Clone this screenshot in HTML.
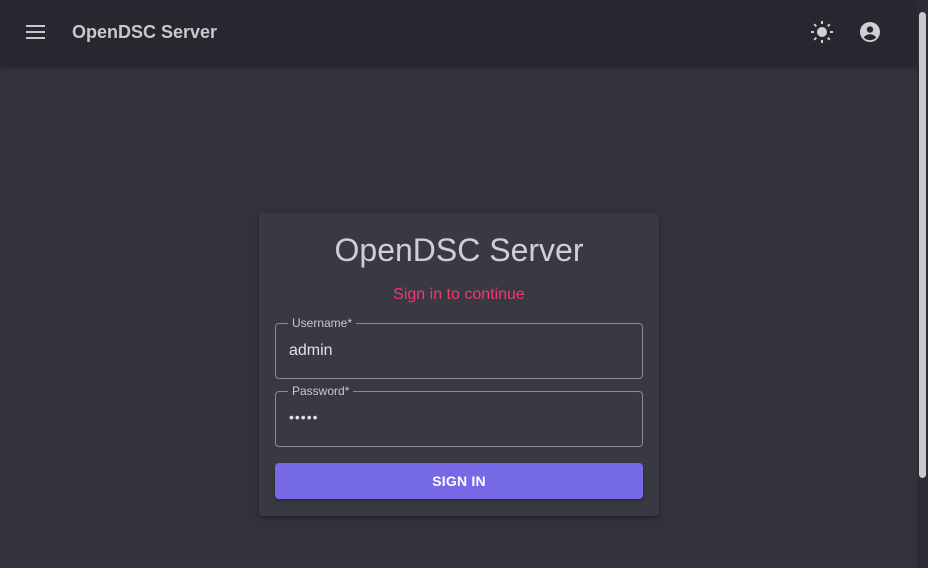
<!DOCTYPE html>
<html><head><style>
*{box-sizing:border-box;margin:0;padding:0}
body{width:928px;height:568px;overflow:hidden;background:#32323c;font-family:"Liberation Sans",sans-serif;position:relative}
.hdr{position:absolute;left:0;top:0;width:917px;height:65px;background:#26272f;box-shadow:0 2px 4px rgba(0,0,0,.3)}
.title{position:absolute;left:72px;top:22px;font-size:18px;font-weight:bold;color:#c8c8cc}
.sb{position:absolute;right:0;top:0;width:11px;height:568px;background:#2b2b33}
.thumb{position:absolute;right:2px;top:12px;width:7px;height:466px;background:#c9c9cc;border-radius:4px}
.card{position:absolute;left:259px;top:213px;width:400px;height:303px;background:#393943;border-radius:4px;box-shadow:0 2px 4px rgba(0,0,0,.3)}
.h{position:absolute;left:0;width:100%;text-align:center;top:19px;font-size:32px;color:#cfcfd3}
.sub{position:absolute;left:0;width:100%;text-align:center;top:73px;font-size:16px;color:#f0386b}
.f{position:absolute;left:16px;width:368px;height:56px;border:1px solid #8a8a90;border-radius:4px}
.f label{position:absolute;left:12px;top:-8px;font-size:12px;color:#c8c8cc;background:#393943;padding:0 4px}
.f span{position:absolute;left:13px;top:18px;font-size:16px;color:#e0e0e4}
.btn{position:absolute;left:16px;top:250px;width:368px;height:36px;background:#7569e6;border-radius:4px;color:#fff;font-weight:bold;font-size:14px;text-align:center;line-height:36px;letter-spacing:.2px;box-shadow:0 2px 3px rgba(0,0,0,.3)}
</style></head><body>
<div class="hdr">
<svg style="position:absolute;left:26px;top:25px" width="20" height="14"><rect y="0" width="19" height="2" fill="#c8c8cc"/><rect y="6" width="19" height="2" fill="#c8c8cc"/><rect y="12" width="19" height="2" fill="#c8c8cc"/></svg>
<div class="title">OpenDSC Server</div>
<svg style="position:absolute;left:810px;top:20px" width="24" height="24" viewBox="0 0 24 24" fill="#d0d0d4"><circle cx="12" cy="12" r="5"/><g stroke="#d0d0d4" stroke-width="2"><line x1="12" y1="1" x2="12" y2="4"/><line x1="12" y1="20" x2="12" y2="23"/><line x1="1" y1="12" x2="4" y2="12"/><line x1="20" y1="12" x2="23" y2="12"/><line x1="4.2" y1="4.2" x2="6.3" y2="6.3"/><line x1="17.7" y1="17.7" x2="19.8" y2="19.8"/><line x1="4.2" y1="19.8" x2="6.3" y2="17.7"/><line x1="17.7" y1="6.3" x2="19.8" y2="4.2"/></g></svg>
<svg style="position:absolute;left:858px;top:20px" width="24" height="24" viewBox="0 0 24 24"><circle cx="12" cy="12" r="10" fill="#d0d0d4"/><circle cx="12" cy="9.5" r="3.2" fill="#26272f"/><path d="M5.8 17.5c1.5-2.3 3.8-3.3 6.2-3.3s4.7 1 6.2 3.3c-1.6 1.8-3.8 2.7-6.2 2.7s-4.6-.9-6.2-2.7z" fill="#26272f"/></svg>
</div>
<div class="sb"><div class="thumb"></div></div>
<div class="card">
<div class="h">OpenDSC Server</div>
<div class="sub">Sign in to continue</div>
<div class="f" style="top:110px"><label>Username*</label><span>admin</span></div>
<div class="f" style="top:178px"><label>Password*</label><span style="letter-spacing:1px;font-size:14px;top:17px">•••••</span></div>
<div class="btn">SIGN IN</div>
</div>
</body></html>
